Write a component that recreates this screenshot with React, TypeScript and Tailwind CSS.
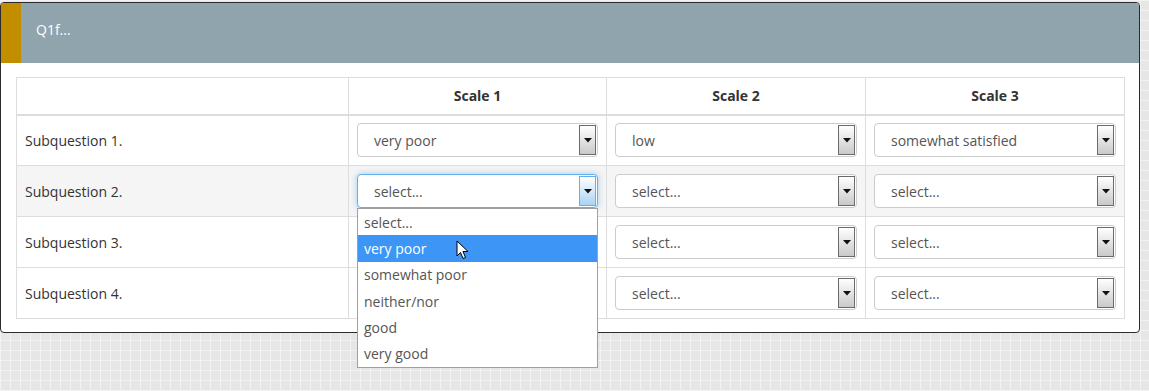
import React from 'react';

const options = ['select...', 'very poor', 'somewhat poor', 'neither/nor', 'good', 'very good'];

const Arrow: React.FC<{ focused?: boolean }> = ({ focused }) => (
  <div
    className={`absolute right-[1px] top-[1px] bottom-[1px] w-[17px] flex items-center justify-center border ${
      focused
        ? 'border-[#6aaee6] bg-[linear-gradient(to_bottom,#ffffff,#a9d3f5)]'
        : 'border-[#6b6b6b] bg-[linear-gradient(to_bottom,#ffffff,#c9c9c9)]'
    }`}
  >
    <svg width="8" height="5" viewBox="0 0 8 5">
      <path d="M0 0 L8 0 L4 4.5 Z" fill="#111" />
    </svg>
  </div>
);

const Select: React.FC<{ value: string; focused?: boolean; open?: boolean }> = ({ value, focused, open }) => (
  <div className="relative">
    <div
      className={`relative h-[34px] rounded-[4px] border bg-white flex items-center pl-4 text-[14px] text-[#555] ${
        focused ? 'border-[#66afe9] shadow-[0_0_6px_rgba(102,175,233,0.6)]' : 'border-[#cccccc]'
      }`}
    >
      {value}
      <Arrow focused={focused} />
    </div>
    {open && (
      <div className="absolute left-0 top-[34px] w-[241px] bg-white border border-[#a0a0a0] z-10">
        {options.map((o, i) => (
          <div
            key={o}
            className={`h-[26.3px] flex items-center pl-[6px] text-[14px] ${
              i === 1 ? 'bg-[#3d96f5] text-white' : 'text-[#555]'
            }`}
          >
            {o}
          </div>
        ))}
        {/* mouse pointer */}
        <svg
          className="absolute left-[98px] top-[31px]"
          width="14"
          height="20"
          viewBox="0 0 14 20"
        >
          <path
            d="M1 1 L1 16 L4.5 12.5 L7 18.5 L9.5 17.5 L7 11.5 L12 11.5 Z"
            fill="#fff"
            stroke="#000"
            strokeWidth="1"
            strokeLinejoin="round"
          />
        </svg>
      </div>
    )}
  </div>
);

const rows = [
  { label: 'Subquestion 1.', values: ['very poor', 'low', 'somewhat satisfied'] },
  { label: 'Subquestion 2.', values: ['select...', 'select...', 'select...'], focusIdx: 0, bg: true },
  { label: 'Subquestion 3.', values: ['', 'select...', 'select...'] },
  { label: 'Subquestion 4.', values: ['', 'select...', 'select...'] },
];

export default function App() {
  return (
    <div className="h-[391px] w-full bg-[#e6e6e6] bg-[linear-gradient(to_right,#f2f2f2_1px,transparent_1px),linear-gradient(to_bottom,#f2f2f2_1px,transparent_1px)] bg-[size:10px_10px] pt-[2px] font-['Open_Sans',sans-serif] overflow-hidden">
      <div className="w-[1140px] h-[331px] bg-white border border-[#2b2b2b] rounded-[4px] overflow-visible">
        <div className="h-[60px] bg-[#90a4ae] flex rounded-t-[3px]">
          <div className="w-[20px] bg-[#c28e00] rounded-tl-[3px]" />
          <div className="pl-[15px] pt-[16px] text-[14px] text-white">Q1f...</div>
        </div>
        <div className="px-[15px] pt-[14px]">
          <table className="table-fixed border-collapse w-[1108px] text-[14px] text-[#333]">
            <colgroup>
              <col className="w-[332px]" />
              <col className="w-[258px]" />
              <col className="w-[259px]" />
              <col className="w-[259px]" />
            </colgroup>
            <thead>
              <tr className="h-[37px]">
                <th className="border border-[#dddddd] border-b-2" />
                {['Scale 1', 'Scale 2', 'Scale 3'].map(s => (
                  <th key={s} className="border border-[#dddddd] border-b-2 font-bold text-center">
                    {s}
                  </th>
                ))}
              </tr>
            </thead>
            <tbody>
              {rows.map((r, ri) => (
                <tr key={r.label} className={`h-[51px] ${r.bg ? 'bg-[#f5f5f5]' : ''}`}>
                  <td className="border border-[#dddddd] pl-[8px]">{r.label}</td>
                  {r.values.map((v, i) => (
                    <td key={i} className="border border-[#dddddd] px-[8px]">
                      {v && <Select value={v} focused={r.focusIdx === i} open={ri === 1 && i === 0} />}
                    </td>
                  ))}
                </tr>
              ))}
            </tbody>
          </table>
        </div>
      </div>
    </div>
  );
}
